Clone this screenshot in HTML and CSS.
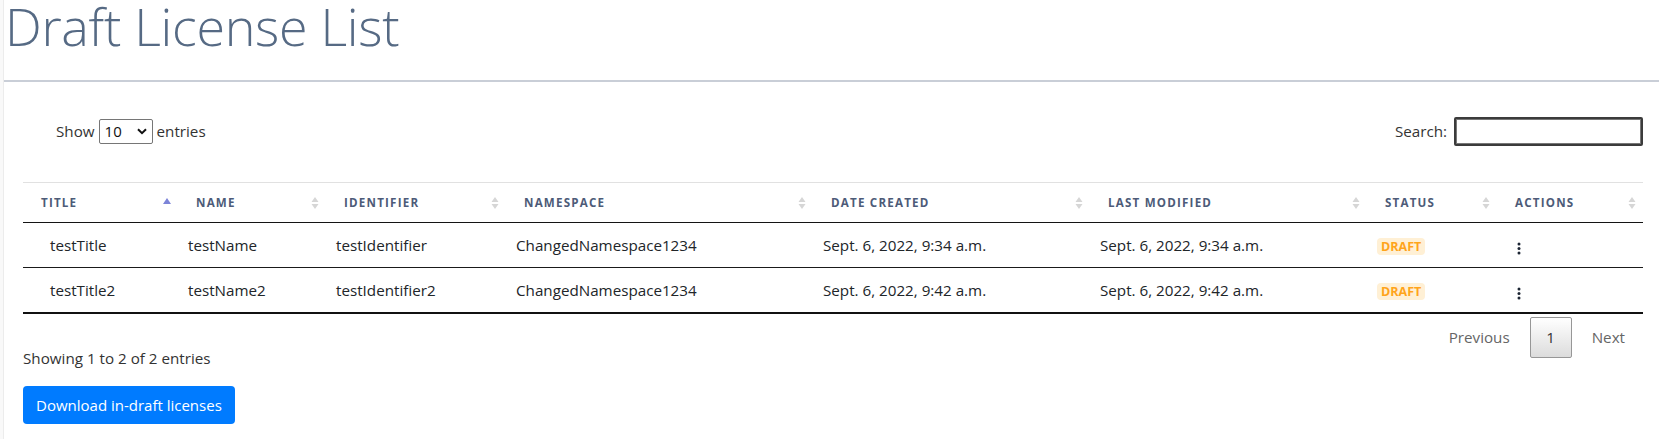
FILE: index.html
```html
<!DOCTYPE html>
<html lang="en">
<head>
<meta charset="utf-8">
<title>Draft License List</title>
<link rel="stylesheet" href="styles.css">
</head>
<body>
<div class="page">
  <div class="sidebar"></div>
  <main class="main">
    <h1 class="page-title">Draft License List</h1>
    <hr class="title-rule">
    <div class="dt-wrapper">
      <div class="dt-controls">
        <label class="dt-length">Show
          <span class="fake-select">10
            <svg class="chev" width="10" height="7" viewBox="0 0 10 7"><path d="M1 1.2 L5 5.2 L9 1.2" fill="none" stroke="#111" stroke-width="2"/></svg>
          </span>
          entries</label>
        <label class="dt-search">Search: <input type="text" class="search-input"></label>
      </div>

      <table class="dt-table">
        <colgroup>
          <col class="c-title"><col class="c-name"><col class="c-ident"><col class="c-ns">
          <col class="c-created"><col class="c-modified"><col class="c-status"><col class="c-actions">
        </colgroup>
        <thead>
          <tr>
            <th><div class="th-inner"><span>Title</span>
              <svg class="sort" width="10" height="14" viewBox="0 0 10 14"><path d="M1 8 L5 2 L9 8 Z" fill="#7c84d8"/></svg></div></th>
            <th><div class="th-inner"><span>Name</span>
              <svg class="sort" width="10" height="14" viewBox="0 0 10 14"><path d="M1.5 6 L5 1 L8.5 6 Z M1.5 8 L5 13 L8.5 8 Z" fill="#d6d6d6"/></svg></div></th>
            <th><div class="th-inner"><span>Identifier</span>
              <svg class="sort" width="10" height="14" viewBox="0 0 10 14"><path d="M1.5 6 L5 1 L8.5 6 Z M1.5 8 L5 13 L8.5 8 Z" fill="#d6d6d6"/></svg></div></th>
            <th><div class="th-inner"><span>Namespace</span>
              <svg class="sort" width="10" height="14" viewBox="0 0 10 14"><path d="M1.5 6 L5 1 L8.5 6 Z M1.5 8 L5 13 L8.5 8 Z" fill="#d6d6d6"/></svg></div></th>
            <th><div class="th-inner"><span>Date Created</span>
              <svg class="sort" width="10" height="14" viewBox="0 0 10 14"><path d="M1.5 6 L5 1 L8.5 6 Z M1.5 8 L5 13 L8.5 8 Z" fill="#d6d6d6"/></svg></div></th>
            <th><div class="th-inner"><span>Last Modified</span>
              <svg class="sort" width="10" height="14" viewBox="0 0 10 14"><path d="M1.5 6 L5 1 L8.5 6 Z M1.5 8 L5 13 L8.5 8 Z" fill="#d6d6d6"/></svg></div></th>
            <th><div class="th-inner"><span>Status</span>
              <svg class="sort" width="10" height="14" viewBox="0 0 10 14"><path d="M1.5 6 L5 1 L8.5 6 Z M1.5 8 L5 13 L8.5 8 Z" fill="#d6d6d6"/></svg></div></th>
            <th><div class="th-inner"><span>Actions</span>
              <svg class="sort" width="10" height="14" viewBox="0 0 10 14"><path d="M1.5 6 L5 1 L8.5 6 Z M1.5 8 L5 13 L8.5 8 Z" fill="#d6d6d6"/></svg></div></th>
          </tr>
        </thead>
        <tbody>
          <tr>
            <td>testTitle</td>
            <td>testName</td>
            <td>testIdentifier</td>
            <td>ChangedNamespace1234</td>
            <td>Sept. 6, 2022, 9:34 a.m.</td>
            <td>Sept. 6, 2022, 9:34 a.m.</td>
            <td><span class="badge-draft">DRAFT</span></td>
            <td><span class="kebab"><svg width="4" height="13" viewBox="0 0 4 13"><circle cx="2" cy="2" r="1.5" fill="#1c2533"/><circle cx="2" cy="6.5" r="1.5" fill="#1c2533"/><circle cx="2" cy="11" r="1.5" fill="#1c2533"/></svg></span></td>
          </tr>
          <tr>
            <td>testTitle2</td>
            <td>testName2</td>
            <td>testIdentifier2</td>
            <td>ChangedNamespace1234</td>
            <td>Sept. 6, 2022, 9:42 a.m.</td>
            <td>Sept. 6, 2022, 9:42 a.m.</td>
            <td><span class="badge-draft">DRAFT</span></td>
            <td><span class="kebab"><svg width="4" height="13" viewBox="0 0 4 13"><circle cx="2" cy="2" r="1.5" fill="#1c2533"/><circle cx="2" cy="6.5" r="1.5" fill="#1c2533"/><circle cx="2" cy="11" r="1.5" fill="#1c2533"/></svg></span></td>
          </tr>
        </tbody>
      </table>

      <div class="dt-footer">
        <div class="dt-info">Showing 1 to 2 of 2 entries</div>
        <div class="dt-paginate">
          <span class="pg-btn disabled">Previous</span>
          <span class="pg-btn current">1</span>
          <span class="pg-btn disabled">Next</span>
        </div>
      </div>

      <button class="btn-download" type="button">Download in-draft licenses</button>
    </div>
  </main>
</div>
</body>
</html>
```

FILE: styles.css
```css
* { box-sizing: border-box; }

html, body {
  margin: 0;
  padding: 0;
  background: #fff;
}

body {
  font-family: "Open Sans", "Noto Sans", sans-serif;
  color: #212529;
  font-size: 15.2px;
}

.page {
  display: flex;
  min-height: 439px;
}

.sidebar {
  width: 4px;
  flex: 0 0 4px;
  background: #f9f9f9;
  border-right: 1px solid #ececec;
}

.main {
  flex: 1;
  min-width: 0;
}

.page-title {
  margin: 0;
  padding: 0 0 0 1px;
  font-family: "Open Sans", sans-serif;
  font-weight: 300;
  font-size: 52px;
  line-height: 52px;
  color: #566a84;
  letter-spacing: -0.3px;
  height: 80px;
}

.title-rule {
  margin: 0;
  border: 0;
  height: 2px;
  background: #c9ced7;
}

.dt-wrapper {
  padding: 0 16px 0 19px;
}

.dt-controls {
  display: flex;
  justify-content: space-between;
  align-items: center;
  padding-top: 33px;
  height: 65px;
}

.dt-length {
  display: flex;
  align-items: center;
  gap: 4px;
  padding-left: 33px;
  color: #333;
}

.fake-select {
  display: inline-flex;
  align-items: center;
  justify-content: space-between;
  width: 54px;
  height: 25px;
  border: 1px solid #767676;
  border-radius: 2px;
  padding: 0 5px 0 5px;
  font-size: 15px;
  color: #111;
}

.dt-search {
  display: flex;
  align-items: center;
  gap: 7px;
  color: #333;
}

.search-input {
  width: 189px;
  height: 29px;
  border: 2px solid #3b3b3b;
  border-radius: 2px;
  font: inherit;
  outline: none;
  box-shadow: inset 0 0 0 1px #777;
}

.dt-table {
  width: 1620px;
  margin-top: 35px;
  border-collapse: collapse;
  table-layout: fixed;
}

.c-title { width: 155px; }
.c-name { width: 148px; }
.c-ident { width: 180px; }
.c-ns { width: 307px; }
.c-created { width: 277px; }
.c-modified { width: 277px; }
.c-status { width: 130px; }
.c-actions { width: 146px; }

.dt-table thead th {
  border-top: 1px solid #e1e1e1;
  border-bottom: 1.5px solid #141414;
  height: 40px;
  padding: 0 6px 0 18px;
  text-align: left;
  font-size: 11.6px;
  font-weight: 700;
  letter-spacing: 1.2px;
  text-transform: uppercase;
  color: #4d5b78;
}

.th-inner {
  display: flex;
  justify-content: space-between;
  align-items: center;
}

.sort { flex: 0 0 auto; }

.dt-table tbody td {
  height: 45px;
  padding: 0 10px;
  border-bottom: 1px solid #1a1a1a;
  white-space: nowrap;
  font-size: 15.2px;
  color: #212529;
}

.dt-table tbody tr:last-child td {
  border-bottom: 2px solid #111;
}

.dt-table tbody td:first-child {
  padding-left: 27px;
}

.badge-draft {
  display: inline-block;
  padding: 1px 4px 0;
  border-radius: 4px;
  background: #fff0d5;
  color: #ffa41b;
  font-weight: 700;
  font-size: 12.5px;
  line-height: 16px;
}

.kebab {
  display: inline-flex;
  padding-left: 10px;
  padding-top: 11px;
}

.dt-footer {
  display: flex;
  justify-content: space-between;
  align-items: flex-start;
  padding-top: 3px;
}

.dt-info {
  padding-top: 31px;
  color: #333;
}

.dt-paginate {
  display: flex;
  gap: 2px;
}

.pg-btn {
  display: inline-flex;
  align-items: center;
  justify-content: center;
  height: 41px;
  padding: 0 17px;
  border: 1px solid transparent;
  border-radius: 2px;
  color: #666;
}

.pg-btn.current {
  width: 42px;
  padding: 0;
  color: #333;
  border-color: #979797;
  background: linear-gradient(to bottom, #ffffff 0%, #dcdcdc 100%);
}

.btn-download {
  display: block;
  margin-top: 18px;
  height: 38px;
  padding: 0 13px;
  border: 0;
  border-radius: 4px;
  background: #007bff;
  color: #fff;
  font-family: "Open Sans", sans-serif;
  font-size: 15px;
}
```
